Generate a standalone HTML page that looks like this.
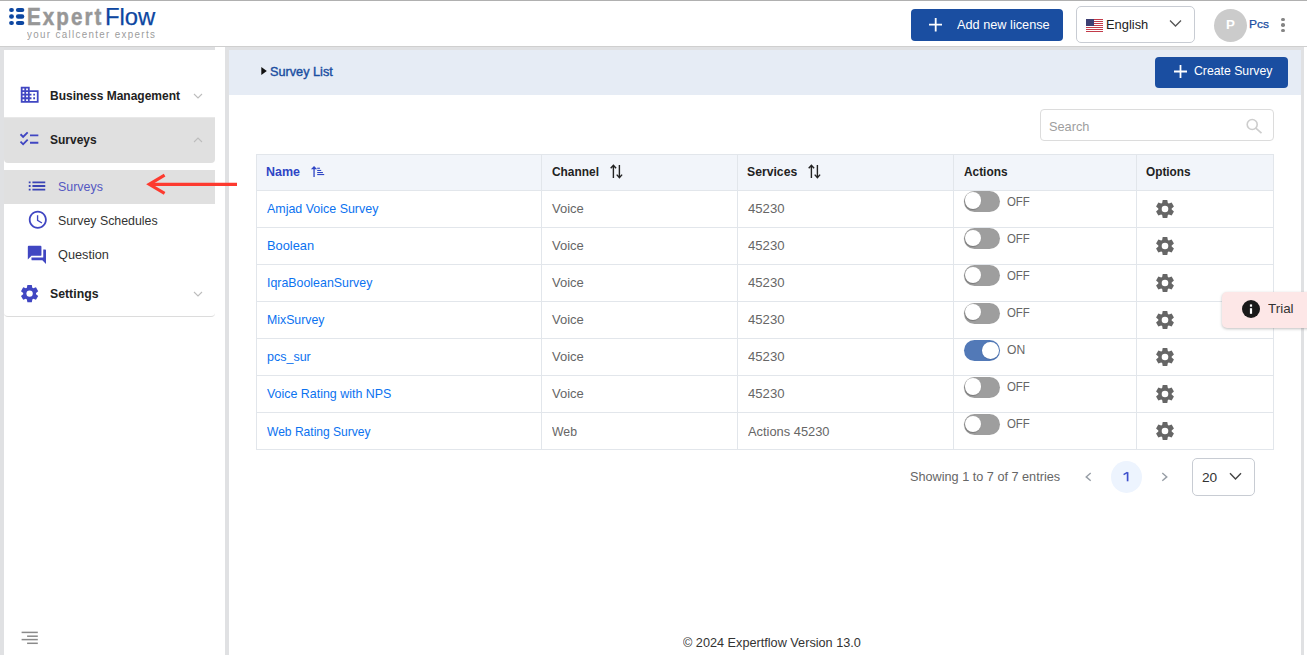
<!DOCTYPE html>
<html><head><meta charset="utf-8">
<style>
*{box-sizing:border-box;margin:0;padding:0}
html,body{width:1307px;height:655px;overflow:hidden}
body{background:#e0e1e3;font-family:"Liberation Sans",sans-serif;position:relative;color:#333}
.abs{position:absolute}
.btn{background:#1a4ea1;border-radius:4px}
.t{position:absolute;white-space:nowrap;line-height:1;transform-origin:0 0}
</style></head>
<body>
<div class="abs" style="left:0px;top:0px;width:1307px;height:1px;background:#b0b0b0"></div>
<div class="abs" style="left:0px;top:1px;width:1307px;height:45px;background:#fff"></div>
<div class="abs" style="left:0px;top:46px;width:1307px;height:1px;background:#cfcfcf"></div>
<div class="abs" style="left:1304px;top:47px;width:3px;height:608px;background:#fff"></div>
<div class="abs" style="left:4px;top:47px;width:221px;height:608px;background:#fff"></div>
<div class="abs" style="left:4px;top:47px;width:211px;height:3px;background:#dfe0e2"></div>
<div class="abs" style="left:229px;top:50px;width:1072px;height:605px;background:#fff"></div>
<div class="abs" style="left:229px;top:50px;width:1072px;height:45px;background:#e6ecf5"></div>
<svg class="abs" style="left:8px;top:7px" width="18" height="20" viewBox="0 0 18 20"><g fill="#0d47a1">
<rect x="1.1" y="0.9" width="4.8" height="4.1" rx="2.05"/><rect x="7.9" y="0.9" width="8.4" height="4.1" rx="2.05"/>
<rect x="1.1" y="7.3" width="4.8" height="4.4" rx="2.2"/><rect x="7.9" y="7.3" width="8.4" height="4.4" rx="2.2"/>
<rect x="1.1" y="13.9" width="4.8" height="4.2" rx="2.1"/><rect x="7.9" y="13.9" width="8.4" height="4.2" rx="2.1"/></g></svg>
<div class="t" style="left:27.0px;top:5.00px;font-size:24px;color:#979797;font-weight:700;letter-spacing:2.4px;transform:scaleX(0.8577);-webkit-text-stroke:0.5px #979797">Expert</div>
<div class="t" style="left:104.9px;top:5.00px;font-size:24px;color:#0d47a1;transform:scaleX(0.9934);-webkit-text-stroke:0.25px #0d47a1">Flow</div>
<div class="t" style="left:27.29px;top:29.00px;font-size:11px;color:#9c9c9c;letter-spacing:1.5px;transform:scaleX(0.8899);">your callcenter experts</div>
<div class="abs" style="left:911px;top:9px;width:152px;height:32px;background:#1a4ea1;border-radius:4px"></div>
<svg class="abs" style="left:929px;top:18.4px" width="13.4" height="13.4" viewBox="0 0 14 14"><path d="M7 0V14M0 7H14" stroke="#fff" stroke-width="1.9"/></svg>
<div class="t" style="left:957.36px;top:18.00px;font-size:13px;color:#fff;transform:scaleX(0.9791);">Add new license</div>
<div class="abs" style="left:1076px;top:6px;width:119px;height:37px;border:1px solid #c8ccd3;border-radius:5px;background:#fff"></div>
<svg class="abs" style="left:1086px;top:19px" width="17" height="13" viewBox="0 0 17 13"><rect width="17" height="13" fill="#fff"/><rect x="0" y="0" width="17" height="1" fill="#c23b4a"/><rect x="0" y="2" width="17" height="1" fill="#c23b4a"/><rect x="0" y="4" width="17" height="1" fill="#c23b4a"/><rect x="0" y="6" width="17" height="1" fill="#c23b4a"/><rect x="0" y="8" width="17" height="1" fill="#c23b4a"/><rect x="0" y="10" width="17" height="1" fill="#c23b4a"/><rect x="0" y="12" width="17" height="1" fill="#c23b4a"/><rect x="0" y="0" width="8" height="7" fill="#3d3f73"/></svg>
<div class="t" style="left:1106.31px;top:18.00px;font-size:13px;color:#222;transform:scaleX(0.9907);">English</div>
<svg class="abs" style="left:1169px;top:19px" width="13" height="9" viewBox="0 0 13 9"><path d="M1 1.5L6.5 7L12 1.5" fill="none" stroke="#555" stroke-width="1.3"/></svg>
<div class="abs" style="left:1214px;top:9px;width:33px;height:33px;border-radius:50%;background:#cbcbcb"></div>
<div class="t" style="left:1226.13px;top:19.00px;font-size:12.6px;color:#fff;font-weight:700;transform:scaleX(1.0569);">P</div>
<div class="t" style="left:1248.87px;top:19.00px;font-size:11.5px;color:#1a4ea1;transform:scaleX(1.0434);-webkit-text-stroke:0.25px #1a4ea1">Pcs</div>
<div class="abs" style="left:1281.2px;top:17.9px;width:3.6px;height:3.6px;border-radius:50%;background:#858585"></div>
<div class="abs" style="left:1281.2px;top:23.3px;width:3.6px;height:3.6px;border-radius:50%;background:#858585"></div>
<div class="abs" style="left:1281.2px;top:28.9px;width:3.6px;height:3.6px;border-radius:50%;background:#858585"></div>
<svg class="abs" style="left:18.6px;top:84.4px" width="21.4" height="21.4" viewBox="0 0 24 24"><path d="M12 7V3H2v18h20V7H12zM6 19H4v-2h2v2zm0-4H4v-2h2v2zm0-4H4V9h2v2zm0-4H4V5h2v2zm4 12H8v-2h2v2zm0-4H8v-2h2v2zm0-4H8V9h2v2zm0-4H8V5h2v2zm10 12h-8v-2h2v-2h-2v-2h2v-2h-2V9h8v10zm-2-8h-2v2h2v-2zm0 4h-2v2h2v-2z" fill="#4046c2"/></svg>
<div class="t" style="left:49.8px;top:90.00px;font-size:12.6px;color:#222;font-weight:700;transform:scaleX(0.9529);">Business Management</div>
<svg class="abs" style="left:193.3px;top:92.8px" width="10" height="6" viewBox="0 0 10 6"><path d="M1 1L5 5L9 1" fill="none" stroke="#bdbdbd" stroke-width="1.1"/></svg>
<div class="abs" style="left:4px;top:117px;width:211px;height:1px;background:#e8e8e8"></div>
<div class="abs" style="left:4px;top:118px;width:211px;height:44.6px;background:#e0e0e0;border-radius:0 0 4px 4px"></div>
<svg class="abs" style="left:18.35px;top:128.4px" width="22.2" height="22.2" viewBox="0 0 24 24"><path d="M22,7h-9v2h9V7z M22,15h-9v2h9V15z M5.54,11L2,7.46l1.41-1.41l2.12,2.12l4.24-4.24l1.41,1.41L5.54,11z M5.54,19L2,15.46l1.41-1.41 l2.12,2.12l4.24-4.24l1.41,1.41L5.54,19z" fill="#4046c2"/></svg>
<div class="t" style="left:50.24px;top:134.00px;font-size:12.6px;color:#222;font-weight:700;transform:scaleX(0.9525);">Surveys</div>
<svg class="abs" style="left:193.3px;top:137.2px" width="10" height="6" viewBox="0 0 10 6"><path d="M1 5L5 1L9 5" fill="none" stroke="#bdbdbd" stroke-width="1.1"/></svg>
<div class="abs" style="left:4px;top:170px;width:211px;height:34px;background:#e0e0e0"></div>
<svg class="abs" style="left:26.46px;top:175.2px" width="22" height="22" viewBox="0 0 24 24"><path d="M3 13h2v-2H3v2zm0 4h2v-2H3v2zm0-8h2V7H3v2zm4 4h14v-2H7v2zm0 4h14v-2H7v2zM7 7v2h14V7H7z" fill="#3b45b5"/></svg>
<div class="t" style="left:58.47px;top:180.00px;font-size:13px;color:#5458c2;transform:scaleX(0.9552);">Surveys</div>
<svg class="abs" style="left:26.7px;top:209.4px" width="21.6" height="21.6" viewBox="0 0 24 24"><path d="M11.99 2C6.47 2 2 6.48 2 12s4.47 10 9.99 10C17.52 22 22 17.52 22 12S17.52 2 11.99 2zM12 20c-4.42 0-8-3.58-8-8s3.58-8 8-8 8 3.58 8 8-3.58 8-8 8zm.5-13H11v6l5.25 3.15.75-1.23-4.5-2.67z" fill="#4046c2"/></svg>
<div class="t" style="left:58.22px;top:214.00px;font-size:13px;color:#333;transform:scaleX(0.9507);">Survey Schedules</div>
<svg class="abs" style="left:26.4px;top:244.4px" width="21.8" height="21.8" viewBox="0 0 24 24"><path d="M21 6h-2v9H6v2c0 .55.45 1 1 1h11l4 4V7c0-.55-.45-1-1-1zm-4 6V3c0-.55-.45-1-1-1H3c-.55 0-1 .45-1 1v14l4-4h10c.55 0 1-.45 1-1z" fill="#4046c2"/></svg>
<div class="t" style="left:58.2px;top:248.00px;font-size:13px;color:#333;transform:scaleX(0.9787);">Question</div>
<svg class="abs" style="left:18.6px;top:282.9px" width="21.2" height="21.2" viewBox="0 0 24 24"><path d="M8.90,5.40 L9.50,2.20 L14.50,2.20 L15.10,5.40 L16.17,6.02 L19.24,4.93 L21.74,9.27 L19.27,11.38 L19.27,12.62 L21.74,14.73 L19.24,19.07 L16.17,17.98 L15.10,18.60 L14.50,21.80 L9.50,21.80 L8.90,18.60 L7.83,17.98 L4.76,19.07 L2.26,14.73 L4.73,12.62 L4.73,11.38 L2.26,9.27 L4.76,4.93 L7.83,6.02Z" fill="#4046c2"/><circle cx="12" cy="12" r="3.6" fill="#fff"/></svg>
<div class="t" style="left:50.41px;top:288.00px;font-size:12.8px;color:#222;font-weight:700;transform:scaleX(0.9602);">Settings</div>
<svg class="abs" style="left:193.3px;top:290.5px" width="10" height="6" viewBox="0 0 10 6"><path d="M1 1L5 5L9 1" fill="none" stroke="#bdbdbd" stroke-width="1.1"/></svg>
<div class="abs" style="left:4px;top:311px;width:211px;height:6px;border-bottom:1px solid #dcdcdc;border-radius:0 0 4px 4px"></div>
<svg class="abs" style="left:140px;top:168px" width="100" height="32" viewBox="0 0 100 32"><path d="M10 16.3H97" stroke="#fd3a2f" stroke-width="3.2"/><path d="M24.6 7.2L9.2 16.3L24.6 25.4" fill="none" stroke="#fd3a2f" stroke-width="3.1" stroke-linejoin="miter"/></svg>
<svg class="abs" style="left:20px;top:628px" width="20" height="20" viewBox="0 0 20 20"><g stroke="#8a8a8a" stroke-width="1.5"><path d="M1.6 4.4H17.8"/><path d="M7.1 8.2H17.8"/><path d="M1.6 11.6H17.8"/><path d="M7.1 15.3H17.8"/></g></svg>
<svg class="abs" style="left:261px;top:67px" width="6" height="8" viewBox="0 0 6 8"><path d="M0.3 0L5.8 4L0.3 8Z" fill="#111"/></svg>
<div class="t" style="left:270.24px;top:65.00px;font-size:13px;color:#1a4ea1;transform:scaleX(0.9764);-webkit-text-stroke:0.4px #1a4ea1">Survey List</div>
<div class="abs" style="left:1155px;top:57px;width:133px;height:31px;background:#1a4ea1;border-radius:4px"></div>
<svg class="abs" style="left:1174.3px;top:64.7px" width="13" height="13" viewBox="0 0 14 14"><path d="M7 0V14M0 7H14" stroke="#fff" stroke-width="1.9"/></svg>
<div class="t" style="left:1193.89px;top:64.00px;font-size:13px;color:#fff;transform:scaleX(0.9427);">Create Survey</div>
<div class="abs" style="left:1040px;top:109px;width:234px;height:32px;border:1px solid #dcdcdc;border-radius:4px;background:#fff"></div>
<div class="t" style="left:1048.94px;top:120.00px;font-size:13px;color:#9e9e9e;transform:scaleX(0.9810);">Search</div>
<svg class="abs" style="left:1245px;top:118px" width="18" height="16" viewBox="0 0 18 16"><circle cx="7.2" cy="6.5" r="5" fill="none" stroke="#cdcdcd" stroke-width="1.6"/><path d="M10.8 10.2L16.5 15.2" stroke="#cdcdcd" stroke-width="1.7"/></svg>
<div class="abs" style="left:256px;top:154px;width:1018px;height:296px;border:1px solid #e2e6eb;background:#fff"></div>
<div class="abs" style="left:257px;top:155px;width:1016px;height:35px;background:#f2f5fa"></div>
<div class="abs" style="left:257px;top:190px;width:1016px;height:1px;background:#e2e6eb"></div>
<div class="abs" style="left:257px;top:227px;width:1016px;height:1px;background:#e2e6eb"></div>
<div class="abs" style="left:257px;top:264px;width:1016px;height:1px;background:#e2e6eb"></div>
<div class="abs" style="left:257px;top:301px;width:1016px;height:1px;background:#e2e6eb"></div>
<div class="abs" style="left:257px;top:338px;width:1016px;height:1px;background:#e2e6eb"></div>
<div class="abs" style="left:257px;top:375px;width:1016px;height:1px;background:#e2e6eb"></div>
<div class="abs" style="left:257px;top:412px;width:1016px;height:1px;background:#e2e6eb"></div>
<div class="abs" style="left:541px;top:155px;width:1px;height:294px;background:#e2e6eb"></div>
<div class="abs" style="left:737px;top:155px;width:1px;height:294px;background:#e2e6eb"></div>
<div class="abs" style="left:953px;top:155px;width:1px;height:294px;background:#e2e6eb"></div>
<div class="abs" style="left:1136px;top:155px;width:1px;height:294px;background:#e2e6eb"></div>
<div class="t" style="left:266.06px;top:165.00px;font-size:13px;color:#2f45c5;font-weight:700;transform:scaleX(0.9586);">Name</div>
<svg class="abs" style="left:306px;top:160px" width="20" height="20" viewBox="0 0 20 20"><rect x="7.4" y="7" width="1.3" height="10" fill="#2f45c5"/><path d="M4.9 9.3L8.05 5.9L11.2 9.3Z" fill="#2f45c5"/><g fill="#2f45c5"><rect x="11.2" y="7.7" width="2.7" height="1.1"/><rect x="11.2" y="9.9" width="4" height="1.1"/><rect x="11.2" y="12" width="5.7" height="1.1"/><rect x="11.2" y="14" width="7" height="1.1"/></g></svg>
<div class="t" style="left:551.74px;top:165.00px;font-size:13px;color:#222;font-weight:700;transform:scaleX(0.9154);">Channel</div>
<svg class="abs" style="left:610px;top:164px" width="14" height="15" viewBox="0 0 14 15"><path d="M3.4 14V1.5M0.7 4.3L3.4 1.3L6.1 4.3" fill="none" stroke="#222" stroke-width="1.4"/><path d="M9.4 1V13.6M6.7 10.6L9.4 13.6L12.1 10.6" fill="none" stroke="#222" stroke-width="1.4"/></svg>
<div class="t" style="left:747.21px;top:165.00px;font-size:13px;color:#222;font-weight:700;transform:scaleX(0.9387);">Services</div>
<svg class="abs" style="left:808px;top:164px" width="14" height="15" viewBox="0 0 14 15"><path d="M3.4 14V1.5M0.7 4.3L3.4 1.3L6.1 4.3" fill="none" stroke="#222" stroke-width="1.4"/><path d="M9.4 1V13.6M6.7 10.6L9.4 13.6L12.1 10.6" fill="none" stroke="#222" stroke-width="1.4"/></svg>
<div class="t" style="left:963.85px;top:165.00px;font-size:13px;color:#222;font-weight:700;transform:scaleX(0.9122);">Actions</div>
<div class="t" style="left:1145.94px;top:165.00px;font-size:13px;color:#222;font-weight:700;transform:scaleX(0.9084);">Options</div>
<div class="t" style="left:267.0px;top:202.00px;font-size:13px;color:#0b72f0;transform:scaleX(0.9573);">Amjad Voice Survey</div>
<div class="t" style="left:552.0px;top:202.00px;font-size:13px;color:#666;">Voice</div>
<div class="t" style="left:748.0px;top:202.00px;font-size:13px;color:#666;transform:scaleX(1.0111);">45230</div>
<div class="abs" style="left:964px;top:191.0px;width:36px;height:21px;border-radius:11px;background:#9e9e9e"></div>
<div class="abs" style="left:964.6px;top:192.3px;width:16.6px;height:16.6px;border-radius:50%;background:#fff;box-shadow:-0.5px 1px 1px #777"></div>
<div class="t" style="left:1007.0px;top:196.00px;font-size:12px;color:#666;transform:scaleX(0.9508);">OFF</div>
<svg class="abs" style="left:1153.7px;top:197.6px" width="22" height="22" viewBox="0 0 24 24"><path d="M8.90,5.40 L9.50,2.20 L14.50,2.20 L15.10,5.40 L16.17,6.02 L19.24,4.93 L21.74,9.27 L19.27,11.38 L19.27,12.62 L21.74,14.73 L19.24,19.07 L16.17,17.98 L15.10,18.60 L14.50,21.80 L9.50,21.80 L8.90,18.60 L7.83,17.98 L4.76,19.07 L2.26,14.73 L4.73,12.62 L4.73,11.38 L2.26,9.27 L4.76,4.93 L7.83,6.02Z" fill="#666"/><circle cx="12" cy="12" r="3.6" fill="#fff"/></svg>
<div class="t" style="left:267.0px;top:239.00px;font-size:13px;color:#0b72f0;transform:scaleX(0.9880);">Boolean</div>
<div class="t" style="left:552.0px;top:239.00px;font-size:13px;color:#666;">Voice</div>
<div class="t" style="left:748.0px;top:239.00px;font-size:13px;color:#666;transform:scaleX(1.0111);">45230</div>
<div class="abs" style="left:964px;top:228.2px;width:36px;height:21px;border-radius:11px;background:#9e9e9e"></div>
<div class="abs" style="left:964.6px;top:229.5px;width:16.6px;height:16.6px;border-radius:50%;background:#fff;box-shadow:-0.5px 1px 1px #777"></div>
<div class="t" style="left:1007.0px;top:233.00px;font-size:12px;color:#666;transform:scaleX(0.9508);">OFF</div>
<svg class="abs" style="left:1153.7px;top:234.72px" width="22" height="22" viewBox="0 0 24 24"><path d="M8.90,5.40 L9.50,2.20 L14.50,2.20 L15.10,5.40 L16.17,6.02 L19.24,4.93 L21.74,9.27 L19.27,11.38 L19.27,12.62 L21.74,14.73 L19.24,19.07 L16.17,17.98 L15.10,18.60 L14.50,21.80 L9.50,21.80 L8.90,18.60 L7.83,17.98 L4.76,19.07 L2.26,14.73 L4.73,12.62 L4.73,11.38 L2.26,9.27 L4.76,4.93 L7.83,6.02Z" fill="#666"/><circle cx="12" cy="12" r="3.6" fill="#fff"/></svg>
<div class="t" style="left:267.0px;top:276.00px;font-size:13px;color:#0b72f0;transform:scaleX(0.9525);">IqraBooleanSurvey</div>
<div class="t" style="left:552.0px;top:276.00px;font-size:13px;color:#666;">Voice</div>
<div class="t" style="left:748.0px;top:276.00px;font-size:13px;color:#666;transform:scaleX(1.0111);">45230</div>
<div class="abs" style="left:964px;top:265.4px;width:36px;height:21px;border-radius:11px;background:#9e9e9e"></div>
<div class="abs" style="left:964.6px;top:266.7px;width:16.6px;height:16.6px;border-radius:50%;background:#fff;box-shadow:-0.5px 1px 1px #777"></div>
<div class="t" style="left:1007.0px;top:270.00px;font-size:12px;color:#666;transform:scaleX(0.9508);">OFF</div>
<svg class="abs" style="left:1153.7px;top:271.84000000000003px" width="22" height="22" viewBox="0 0 24 24"><path d="M8.90,5.40 L9.50,2.20 L14.50,2.20 L15.10,5.40 L16.17,6.02 L19.24,4.93 L21.74,9.27 L19.27,11.38 L19.27,12.62 L21.74,14.73 L19.24,19.07 L16.17,17.98 L15.10,18.60 L14.50,21.80 L9.50,21.80 L8.90,18.60 L7.83,17.98 L4.76,19.07 L2.26,14.73 L4.73,12.62 L4.73,11.38 L2.26,9.27 L4.76,4.93 L7.83,6.02Z" fill="#666"/><circle cx="12" cy="12" r="3.6" fill="#fff"/></svg>
<div class="t" style="left:267.0px;top:313.00px;font-size:13px;color:#0b72f0;transform:scaleX(0.9474);">MixSurvey</div>
<div class="t" style="left:552.0px;top:313.00px;font-size:13px;color:#666;">Voice</div>
<div class="t" style="left:748.0px;top:313.00px;font-size:13px;color:#666;transform:scaleX(1.0111);">45230</div>
<div class="abs" style="left:964px;top:302.6px;width:36px;height:21px;border-radius:11px;background:#9e9e9e"></div>
<div class="abs" style="left:964.6px;top:303.90000000000003px;width:16.6px;height:16.6px;border-radius:50%;background:#fff;box-shadow:-0.5px 1px 1px #777"></div>
<div class="t" style="left:1007.0px;top:307.00px;font-size:12px;color:#666;transform:scaleX(0.9508);">OFF</div>
<svg class="abs" style="left:1153.7px;top:308.96000000000004px" width="22" height="22" viewBox="0 0 24 24"><path d="M8.90,5.40 L9.50,2.20 L14.50,2.20 L15.10,5.40 L16.17,6.02 L19.24,4.93 L21.74,9.27 L19.27,11.38 L19.27,12.62 L21.74,14.73 L19.24,19.07 L16.17,17.98 L15.10,18.60 L14.50,21.80 L9.50,21.80 L8.90,18.60 L7.83,17.98 L4.76,19.07 L2.26,14.73 L4.73,12.62 L4.73,11.38 L2.26,9.27 L4.76,4.93 L7.83,6.02Z" fill="#666"/><circle cx="12" cy="12" r="3.6" fill="#fff"/></svg>
<div class="t" style="left:267.0px;top:350.00px;font-size:13px;color:#0b72f0;transform:scaleX(0.9616);">pcs_sur</div>
<div class="t" style="left:552.0px;top:350.00px;font-size:13px;color:#666;">Voice</div>
<div class="t" style="left:748.0px;top:350.00px;font-size:13px;color:#666;transform:scaleX(1.0111);">45230</div>
<div class="abs" style="left:964px;top:339.8px;width:36px;height:21px;border-radius:11px;background:#5279b7"></div>
<div class="abs" style="left:982.4px;top:342.0px;width:16.6px;height:16.6px;border-radius:50%;background:#fff;box-shadow:0 0.5px 1px #3b5f9a"></div>
<div class="t" style="left:1007.0px;top:344.00px;font-size:12px;color:#666;transform:scaleX(1.0092);">ON</div>
<svg class="abs" style="left:1153.7px;top:346.08000000000004px" width="22" height="22" viewBox="0 0 24 24"><path d="M8.90,5.40 L9.50,2.20 L14.50,2.20 L15.10,5.40 L16.17,6.02 L19.24,4.93 L21.74,9.27 L19.27,11.38 L19.27,12.62 L21.74,14.73 L19.24,19.07 L16.17,17.98 L15.10,18.60 L14.50,21.80 L9.50,21.80 L8.90,18.60 L7.83,17.98 L4.76,19.07 L2.26,14.73 L4.73,12.62 L4.73,11.38 L2.26,9.27 L4.76,4.93 L7.83,6.02Z" fill="#666"/><circle cx="12" cy="12" r="3.6" fill="#fff"/></svg>
<div class="t" style="left:267.0px;top:387.00px;font-size:13px;color:#0b72f0;transform:scaleX(0.9559);">Voice Rating with NPS</div>
<div class="t" style="left:552.0px;top:387.00px;font-size:13px;color:#666;">Voice</div>
<div class="t" style="left:748.0px;top:387.00px;font-size:13px;color:#666;transform:scaleX(1.0111);">45230</div>
<div class="abs" style="left:964px;top:377.0px;width:36px;height:21px;border-radius:11px;background:#9e9e9e"></div>
<div class="abs" style="left:964.6px;top:378.3px;width:16.6px;height:16.6px;border-radius:50%;background:#fff;box-shadow:-0.5px 1px 1px #777"></div>
<div class="t" style="left:1007.0px;top:381.00px;font-size:12px;color:#666;transform:scaleX(0.9508);">OFF</div>
<svg class="abs" style="left:1153.7px;top:383.20000000000005px" width="22" height="22" viewBox="0 0 24 24"><path d="M8.90,5.40 L9.50,2.20 L14.50,2.20 L15.10,5.40 L16.17,6.02 L19.24,4.93 L21.74,9.27 L19.27,11.38 L19.27,12.62 L21.74,14.73 L19.24,19.07 L16.17,17.98 L15.10,18.60 L14.50,21.80 L9.50,21.80 L8.90,18.60 L7.83,17.98 L4.76,19.07 L2.26,14.73 L4.73,12.62 L4.73,11.38 L2.26,9.27 L4.76,4.93 L7.83,6.02Z" fill="#666"/><circle cx="12" cy="12" r="3.6" fill="#fff"/></svg>
<div class="t" style="left:267.0px;top:425.00px;font-size:13px;color:#0b72f0;transform:scaleX(0.9267);">Web Rating Survey</div>
<div class="t" style="left:552.0px;top:425.00px;font-size:13px;color:#666;transform:scaleX(0.9413);">Web</div>
<div class="t" style="left:748.0px;top:425.00px;font-size:13px;color:#666;transform:scaleX(0.9891);">Actions 45230</div>
<div class="abs" style="left:964px;top:414.2px;width:36px;height:21px;border-radius:11px;background:#9e9e9e"></div>
<div class="abs" style="left:964.6px;top:415.5px;width:16.6px;height:16.6px;border-radius:50%;background:#fff;box-shadow:-0.5px 1px 1px #777"></div>
<div class="t" style="left:1007.0px;top:418.00px;font-size:12px;color:#666;transform:scaleX(0.9508);">OFF</div>
<svg class="abs" style="left:1153.7px;top:420.32000000000005px" width="22" height="22" viewBox="0 0 24 24"><path d="M8.90,5.40 L9.50,2.20 L14.50,2.20 L15.10,5.40 L16.17,6.02 L19.24,4.93 L21.74,9.27 L19.27,11.38 L19.27,12.62 L21.74,14.73 L19.24,19.07 L16.17,17.98 L15.10,18.60 L14.50,21.80 L9.50,21.80 L8.90,18.60 L7.83,17.98 L4.76,19.07 L2.26,14.73 L4.73,12.62 L4.73,11.38 L2.26,9.27 L4.76,4.93 L7.83,6.02Z" fill="#666"/><circle cx="12" cy="12" r="3.6" fill="#fff"/></svg>
<div class="t" style="left:910.12px;top:470.00px;font-size:13px;color:#666;transform:scaleX(0.9752);">Showing 1 to 7 of 7 entries</div>
<svg class="abs" style="left:1085px;top:472px" width="7" height="10" viewBox="0 0 7 10"><path d="M5.7 1L1.2 4.9L5.7 8.8" fill="none" stroke="#979ea6" stroke-width="1.4"/></svg>
<div class="abs" style="left:1110.8px;top:461px;width:31.4px;height:32px;border-radius:50%;background:#edf4fe"></div>
<svg class="abs" style="left:1122px;top:471px" width="8" height="12" viewBox="0 0 8 12"><path d="M5.6 1.2V10.3" stroke="#3d4fcc" stroke-width="1.7"/><path d="M1.6 3.6L5.4 1.4" stroke="#3d4fcc" stroke-width="1.4"/></svg>
<svg class="abs" style="left:1161px;top:472px" width="7" height="10" viewBox="0 0 7 10"><path d="M1.3 1L5.8 4.9L1.3 8.8" fill="none" stroke="#979ea6" stroke-width="1.4"/></svg>
<div class="abs" style="left:1192px;top:458px;width:63px;height:38px;border:1px solid #c8ccd3;border-radius:5px;background:#fff"></div>
<div class="t" style="left:1201.52px;top:471.00px;font-size:13.5px;color:#333;transform:scaleX(1.0126);">20</div>
<svg class="abs" style="left:1228.5px;top:472px" width="13" height="9" viewBox="0 0 13 9"><path d="M1 1.2L6.5 7L12 1.2" fill="none" stroke="#444" stroke-width="1.4"/></svg>
<div class="abs" style="left:1222px;top:292px;width:95px;height:36px;background:#fde7e7;border-radius:5px;box-shadow:0 1px 3px rgba(0,0,0,0.25)"></div>
<svg class="abs" style="left:1242px;top:300px" width="18" height="18" viewBox="0 0 18 18"><circle cx="9" cy="9" r="9" fill="#1a1a1a"/><rect x="7.9" y="8.2" width="2.2" height="5.6" fill="#fff"/><rect x="7.9" y="4.4" width="2.2" height="2.3" fill="#fff"/></svg>
<div class="t" style="left:1268.48px;top:302.00px;font-size:13px;color:#333;transform:scaleX(1.0316);">Trial</div>
<div class="t" style="left:682.85px;top:636.00px;font-size:13px;color:#333;transform:scaleX(0.9757);">© 2024 Expertflow Version 13.0</div>
</body></html>
